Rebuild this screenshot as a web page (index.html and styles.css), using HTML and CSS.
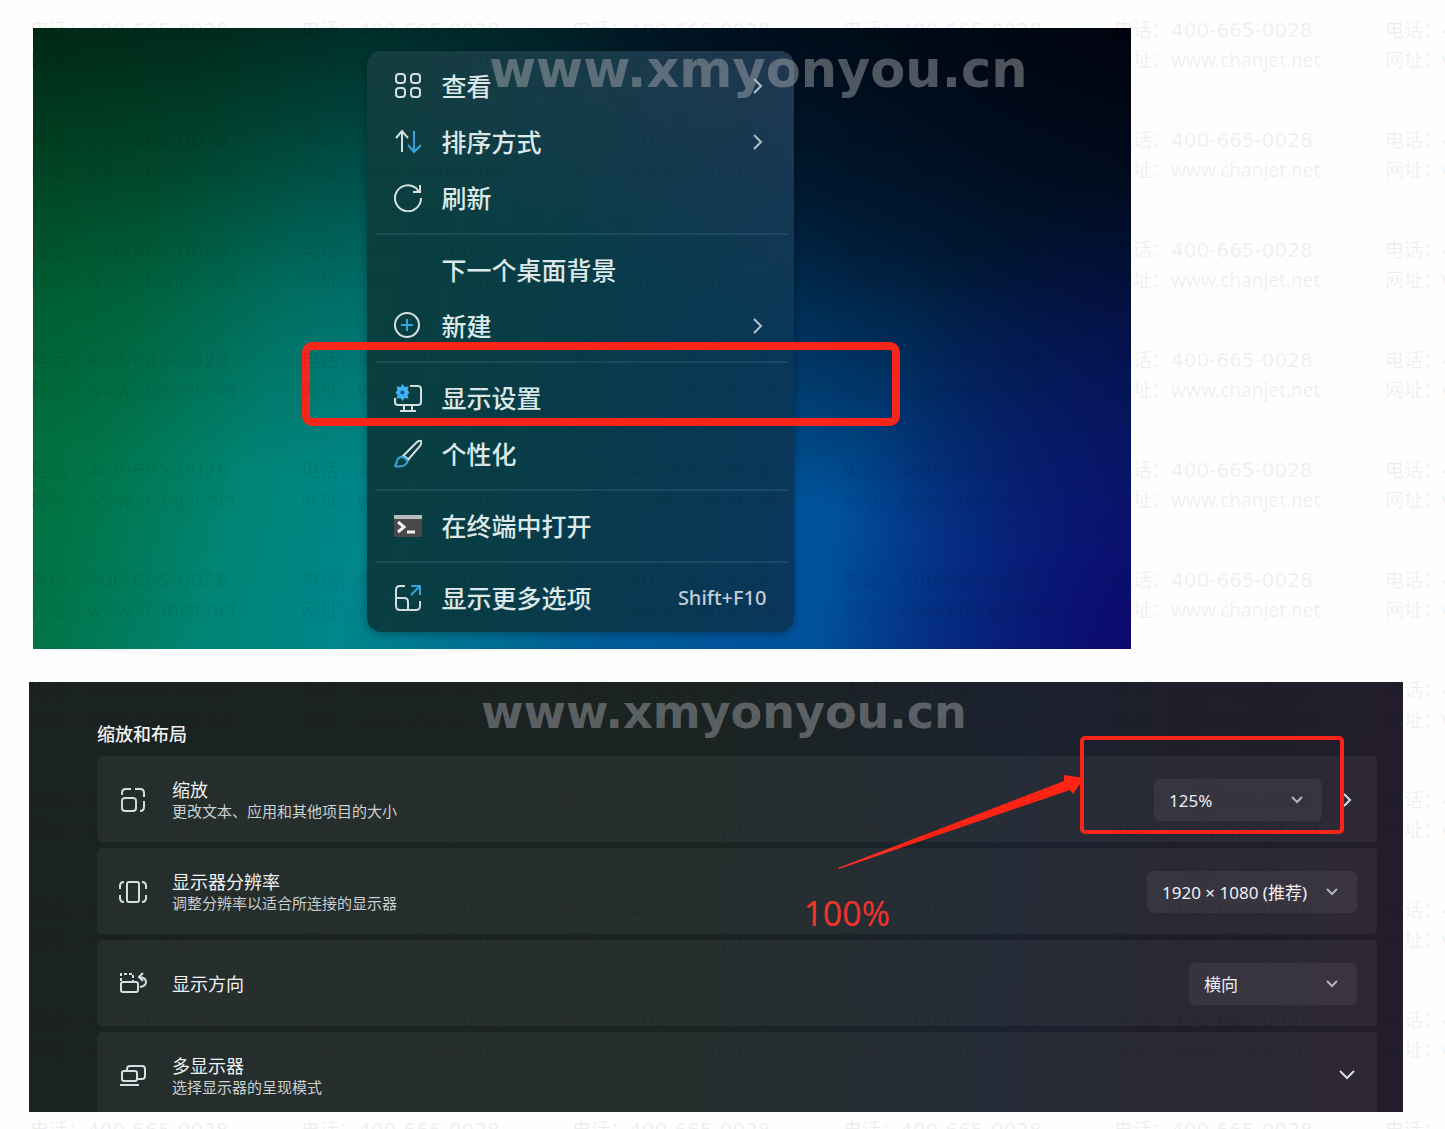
FILE: index.html
```html
<!DOCTYPE html>
<html lang="zh-CN">
<head>
    <meta charset="UTF-8">
    <meta name="viewport" content="width=device-width, initial-scale=1.0">
    <title>显示设置</title>
    <link rel="stylesheet" href="styles.css">
</head>
<body>
  <main>
    <!-- desktop with its context menu -->
    <section class="desktop">
      <div class="menu">
        <button type="button" class="item">
          <svg class="icon" viewBox="0 0 28 28"><rect x="2" y="2" width="9" height="9" rx="3"/><rect x="17" y="2" width="9" height="9" rx="3"/><rect x="2" y="16" width="9" height="9" rx="3"/><rect x="17" y="16" width="9" height="9" rx="3"/></svg>
          <span>查看</span>
          <svg class="more" viewBox="0 0 20 20"><path d="M7 3l7 7-7 7"/></svg>
        </button>
        <button type="button" class="item">
          <svg class="icon" viewBox="0 0 28 28"><path d="M8 24V4M2 10l6-7 6 7"/><path class="blue" d="M20 3v20M14 17l6 7 7-7"/></svg>
          <span>排序方式</span>
          <svg class="more" viewBox="0 0 20 20"><path d="M7 3l7 7-7 7"/></svg>
        </button>
        <button type="button" class="item">
          <svg class="icon" viewBox="0 0 28 28"><path d="M27 14A13 13 0 1 1 22 4l3 4M26 1v7h-7"/></svg>
          <span>刷新</span>
        </button>
        <hr>
        <button type="button" class="item">
          <span class="icon"></span>
          <span>下一个桌面背景</span>
        </button>
        <button type="button" class="item">
          <svg class="icon" viewBox="0 0 28 28"><circle cx="13" cy="13" r="12"/><path class="blue" d="M13 7v12M7 13h12"/></svg>
          <span>新建</span>
          <svg class="more" viewBox="0 0 20 20"><path d="M7 3l7 7-7 7"/></svg>
        </button>
        <hr>
        <div class="marked">
          <button type="button" class="item">
            <svg class="icon" viewBox="0 0 28 28"><path d="M16 2h8q3 0 3 3v13q0 3-3 3H4q-3 0-3-3v-4M10 21v5M18 21v5M6 27h16"/><path class="gear" d="M8.500 0l2 3 4-.5-1 3.500 2 2.500-2 2.500 1 3.500-4-.5-2 3-2-3-4 .5 1-3.500-2-2.500 2-2.500-1-3.500 4 .5z"/><circle class="hole" cx="8.500" cy="8.500" r="2"/></svg>
            <span>显示设置</span>
          </button>
          <div class="red_box"></div>
        </div>
        <button type="button" class="item">
          <svg class="icon" viewBox="0 0 28 28"><path d="M8 17L22 3q3-3 5-2 1 2-1 5L13 21M10 16l4 3"/><path class="blue" d="M8 17q-4 0-5 4-.5 3-2 5 6 1.500 10-1 4-3 1-6-2-2-4-2z"/></svg>
          <span>个性化</span>
        </button>
        <hr>
        <button type="button" class="item">
          <svg class="icon" viewBox="0 0 28 28"><rect class="term" x="0" y="3" width="28" height="22"/><rect class="term_bar" x="0" y="3" width="28" height="4"/><path class="prompt" d="M4 10l6 5-6 5M13 20h8"/></svg>
          <span>在终端中打开</span>
        </button>
        <hr>
        <button type="button" class="item">
          <svg class="icon" viewBox="0 0 28 28"><path d="M11 2H6Q2 2 2 6v16q0 4 4 4h16q4 0 4-4v-5M2 14h8q4 0 4 4v8"/><path class="blue" d="M17 11l9-9M17 2h9v9"/></svg>
          <span>显示更多选项</span>
          <span class="key">Shift+F10</span>
        </button>
      </div>
      <div class="site site_big">www.xmyonyou.cn</div>
    </section>

    <!-- scale & layout settings -->
    <section class="settings">
      <h2>缩放和布局</h2>
      <div class="card">
        <svg class="icon" viewBox="0 0 28 28"><path d="M3 9V7q0-4 4-4h5M16 3h5q4 0 4 4v4M25 15v6q0 4-4 4"/><rect x="3" y="12" width="14" height="13" rx="3"/></svg>
        <div class="text">
          <label for="scale">缩放</label>
          <p>更改文本、应用和其他项目的大小</p>
        </div>
        <div class="drop">
          <select id="scale"><option>125%</option><option>100%</option></select>
          <svg viewBox="0 0 20 20"><path d="M5 8l5 5 5-5"/></svg>
        </div>
        <svg class="arrow" viewBox="0 0 20 20"><path d="M7 4l6 6-6 6"/></svg>
        <div class="red_box"></div>
        <svg class="pointer" viewBox="0 0 250 100"><path d="M2 96L228 9 228 3 248 6 237 22 234 18 3 97z"/></svg>
        <div class="note">100%</div>
      </div>
      <div class="card">
        <svg class="icon" viewBox="0 0 28 28"><rect x="8" y="4" width="12" height="20" rx="2"/><path d="M5 4Q1 4 1 8v3M1 17v3q0 4 4 4M23 4q4 0 4 4v3M27 17v3q0 4-4 4"/></svg>
        <div class="text">
          <label for="size">显示器分辨率</label>
          <p>调整分辨率以适合所连接的显示器</p>
        </div>
        <div class="drop wide">
          <select id="size"><option>1920 × 1080 (推荐)</option></select>
          <svg viewBox="0 0 20 20"><path d="M5 8l5 5 5-5"/></svg>
        </div>
      </div>
      <div class="card">
        <svg class="icon" viewBox="0 0 28 28"><rect x="2" y="12" width="17" height="10" rx="2"/><path stroke-dasharray="3 2" d="M2 11V4h12v8"/><path d="M21 17q6-1 6-5t-6-5M24 3l-4 4 4 4"/></svg>
        <div class="text">
          <label for="turn">显示方向</label>
        </div>
        <div class="drop">
          <select id="turn"><option>横向</option><option>纵向</option></select>
          <svg viewBox="0 0 20 20"><path d="M5 8l5 5 5-5"/></svg>
        </div>
      </div>
      <div class="card last">
        <svg class="icon" viewBox="0 0 28 28"><path d="M8 9V7q0-3 3-3h12q3 0 3 3v7q0 3-3 3h-4"/><rect x="3" y="9" width="15" height="10" rx="2"/><path d="M1 23h19"/></svg>
        <div class="text">
          <h3>多显示器</h3>
          <p>选择显示器的呈现模式</p>
        </div>
        <svg class="arrow" viewBox="0 0 20 20"><path d="M3 5l7 7 7-7"/></svg>
      </div>
      <div class="site site_small">www.xmyonyou.cn</div>
    </section>
  </main>
  <div id="tiles"></div>

<script type="text/javascript">
  var tiles = document.getElementById('tiles')

  // 6 columns x 11 rows
  for (var i = 0; i < 66; i++) {
    var tile = document.createElement('div')
    tile.innerHTML = '电话：<span class="tel">400-665-0028</span><br>网址：<span>www.chanjet.net</span>'
    tiles.appendChild(tile)
  }
</script>
</body>
</html>
```
FILE: styles.css
```css
* {
  box-sizing: border-box;
}
body {
  position: relative;
  min-height: 100vh;
  margin: 0;
  background: #fefefe;
  font-family: "Noto Sans", "Noto Sans CJK SC", sans-serif;
}
main {
  padding: 28px 42px 17px 29px;
}
svg {
  display: block;
  fill: none;
  stroke: #d5dfdf;
  stroke-width: 2;
  flex: none;
}
button, select {
  font-family: inherit;
  border: 0;
  appearance: none;
}
.icon {
  width: 28px;
  height: 28px;
  flex: none;
}

/* desktop */
.desktop {
  position: relative;
  margin: 0 272px 33px 4px;
  padding: 23px 4px 17px 0;
  background:
    radial-gradient(ellipse 28% 75% at 100% 100%, rgba(14, 5, 110, 0.9), rgba(10, 5, 80, 0)),
    radial-gradient(ellipse 70% 85% at 100% 0%, rgba(0, 2, 12, 0.9), rgba(0, 4, 16, 0.6) 50%, rgba(0, 8, 20, 0)),
    linear-gradient(182deg, rgba(0, 8, 8, 0.74) 0%, rgba(0, 8, 8, 0.54) 17%, rgba(0, 8, 8, 0.18) 45%, rgba(0, 0, 0, 0) 72%),
    linear-gradient(105deg, #006a30 0%, #007548 14%, #008474 26%, #00868c 37%, #005c98 58%, #00509c 75%, #002a70 100%);
}
.menu {
  width: 427px;
  margin: 0 auto;
  padding: 7px 0 6px;
  border-radius: 14px;
  background:
    linear-gradient(200deg, rgba(55, 55, 75, 0.5), rgba(30, 50, 80, 0) 40%),
    linear-gradient(100deg, #0a403c 0%, #083c48 45%, #0a365c 100%);
  box-shadow: 0 2px 8px rgba(0, 0, 0, 0.3);
}
.menu hr {
  height: 2px;
  margin: 7px 7px 7px 8px;
  border: 0;
  background: rgba(160, 200, 210, 0.12);
}
.item {
  display: flex;
  align-items: center;
  gap: 20px;
  width: 100%;
  height: 56px;
  padding: 0 27px;
  background: none;
  color: #dde8e8;
  font-size: 25px;
  font-weight: 500;
  line-height: 36px;
  text-align: left;
}
.item .more {
  width: 20px;
  height: 20px;
  margin-left: auto;
  stroke: #b4c2ca;
}
.item .blue {
  stroke: #39a5dc;
}
.gear {
  fill: #42b4f5;
  stroke: none;
}
.hole {
  fill: #0a5c86;
  stroke: none;
}
.term {
  fill: #49484a;
  stroke: none;
}
.term_bar {
  fill: #b9bcbc;
  stroke: none;
}
.prompt {
  stroke: #f2f2f2;
  stroke-width: 3;
}
.key {
  margin-left: auto;
  color: #c3ced6;
  font-size: 20px;
}
.marked {
  position: relative;
}
.red_box {
  position: absolute;
  border: 4px solid #f9241a;
  border-radius: 5px;
}
.marked .red_box {
  top: -28px;
  bottom: 0;
  left: -65px;
  right: -106px;
  border-width: 8px;
  border-radius: 10px;
}

/* big site name over each panel */
.site {
  position: absolute;
  color: rgba(175, 178, 180, 0.45);
  font-family: "DejaVu Sans", sans-serif;
  font-weight: bold;
  line-height: 60px;
  white-space: nowrap;
}
.site_big {
  top: 12px;
  left: 456px;
  font-size: 51px;
}
.site_small {
  top: 0;
  left: 452px;
  font-size: 46px;
}

/* settings */
.settings {
  position: relative;
  padding: 40px 26px 0 68px;
  background: linear-gradient(95deg, #1b2322 0%, #1b2323 50%, #1b222e 70%, #1f1e2a 84%, #241d2b 100%);
  color: #f0f2f2;
}
.settings h2 {
  margin: 0 0 10px;
  font-size: 18px;
  font-weight: 500;
  line-height: 24px;
}
.card {
  position: relative;
  display: flex;
  align-items: center;
  height: 86px;
  margin-bottom: 6px;
  padding: 2px 20px 0 22px;
  border-radius: 5px;
  background: rgba(255, 255, 255, 0.05);
}
.last {
  height: 80px;
  margin-bottom: 0;
  padding-top: 8px;
  border-radius: 5px 5px 0 0;
}
.text {
  flex: 1;
  margin-left: 25px;
}
.text label, .text h3 {
  display: block;
  margin: 0;
  font-size: 18px;
  font-weight: normal;
  line-height: 22px;
}
.text p {
  margin: 0;
  color: #ccd1d1;
  font-size: 15px;
  line-height: 20px;
}
.drop {
  position: relative;
  width: 168px;
}
.wide {
  width: 210px;
}
.drop select {
  width: 100%;
  height: 42px;
  padding: 0 15px;
  border-radius: 6px;
  background: rgba(255, 255, 255, 0.06);
  color: #f0f0f4;
  font-size: 17px;
}
.drop svg {
  position: absolute;
  top: 10px;
  right: 15px;
  width: 20px;
  height: 20px;
  stroke: #b5b4bd;
  pointer-events: none;
}
.arrow {
  width: 20px;
  height: 20px;
}
.drop + .arrow {
  margin-left: 15px;
}
.card .red_box {
  top: -20px;
  right: 33px;
  width: 264px;
  height: 98px;
}
.pointer {
  position: absolute;
  top: 16px;
  right: 291px;
  width: 250px;
  height: 100px;
  fill: #ff2414;
  stroke: none;
}
.note {
  position: absolute;
  top: 134px;
  right: 487px;
  color: #ef2a20;
  font-size: 34px;
  line-height: 46px;
}

/* repeated contact text over the whole page */
#tiles {
  position: absolute;
  top: 0;
  right: 0;
  bottom: 0;
  left: 0;
  display: grid;
  grid-template-columns: repeat(6, 271px);
  grid-auto-rows: 110px;
  padding: 15px 0 0 30px;
  overflow: hidden;
  color: rgba(0, 0, 0, 0.07);
  font-size: 19px;
  line-height: 30px;
  pointer-events: none;
  white-space: nowrap;
}
#tiles .tel {
  font-family: "DejaVu Sans", sans-serif;
  font-size: 20px;
}
```
